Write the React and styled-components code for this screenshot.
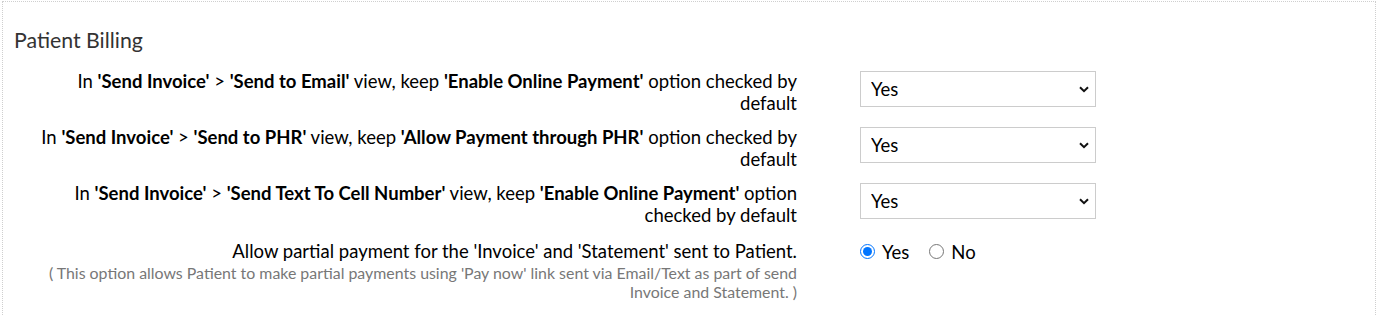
import React from 'react'
import styled, { createGlobalStyle } from 'styled-components'

const GlobalStyle = createGlobalStyle`
  html, body {
    margin: 0;
    padding: 0;
    background: #fff;
  }
  body {
    font-family: Lato, "Open Sans", "Liberation Sans", sans-serif;
    color: #000;
  }
`

const Panel = styled.section`
  margin: 1px 2px 0 2px;
  min-height: 330px;
  border: 1px dotted #cfcfcf;
  padding: 27px 0 0 11px;
  box-sizing: border-box;
`

const Heading = styled.h3`
  margin: 0 0 20px 0;
  font-size: 21.3px;
  font-weight: 400;
  line-height: 22px;
  color: #333;
`

const Row = styled.div`
  display: grid;
  grid-template-columns: 783px 236px;
  column-gap: 63px;
  align-items: start;
  margin-bottom: ${props => props.gap || 13}px;
`

const Label = styled.div`
  padding-left: 17px;
  text-align: right;
  font-size: 18.5px;
  line-height: 21.5px;
  color: #000;

  b {
    font-weight: 700;
  }
`

const Hint = styled.div`
  font-size: 15.9px;
  line-height: 19px;
  color: #777;
`

const SelectWrap = styled.div`
  position: relative;
  width: 236px;
  height: 36px;
`

const Select = styled.select`
  appearance: none;
  width: 100%;
  height: 100%;
  box-sizing: border-box;
  border: 1px solid #ccc;
  border-radius: 0;
  background: #fff;
  padding: 0 28px 0 10px;
  font-family: Lato, "Open Sans", "Liberation Sans", sans-serif;
  font-size: 18.5px;
  color: #000;
  outline: none;
`

const Chevron = styled.svg`
  position: absolute;
  right: 7px;
  top: 15px;
  pointer-events: none;
`

const RadioGroup = styled.div`
  display: flex;
  align-items: center;
  gap: 20px;
  height: 21px;
`

const RadioLabel = styled.label`
  display: inline-flex;
  align-items: center;
  gap: 7px;
  font-size: 18.5px;
  color: #000;

  input {
    margin: 0;
    width: 15px;
    height: 15px;
  }
`

const YesNoSelect = () => (
  <SelectWrap>
    <Select defaultValue="Yes">
      <option>Yes</option>
      <option>No</option>
    </Select>
    <Chevron width="10" height="7" viewBox="0 0 10 7">
      <path d="M1 1.2 L5 5.2 L9 1.2" fill="none" stroke="#111" strokeWidth="2" />
    </Chevron>
  </SelectWrap>
)

const rows = [
  <>In <b>'Send Invoice'</b> &gt; <b>'Send to Email'</b> view, keep <b>'Enable Online Payment'</b> option checked by default</>,
  <>In <b>'Send Invoice'</b> &gt; <b>'Send to PHR'</b> view, keep <b>'Allow Payment through PHR'</b> option checked by default</>,
  <>In <b>'Send Invoice'</b> &gt; <b>'Send Text To Cell Number'</b> view, keep <b>'Enable Online Payment'</b> option checked by default</>,
]

export default function App() {
  return (
    <>
      <GlobalStyle />
      <Panel>
        <Heading>Patient Billing</Heading>
        {rows.map((text, i) => (
          <Row key={i} gap={i === 2 ? 15 : 13}>
            <Label>{text}</Label>
            <YesNoSelect />
          </Row>
        ))}
        <Row>
          <Label>
            Allow partial payment for the 'Invoice' and 'Statement' sent to Patient.
            <Hint>( This option allows Patient to make partial payments using 'Pay now' link sent via Email/Text as part of send Invoice and Statement. )</Hint>
          </Label>
          <RadioGroup>
            <RadioLabel>
              <input type="radio" name="partial" defaultChecked /> Yes
            </RadioLabel>
            <RadioLabel>
              <input type="radio" name="partial" /> No
            </RadioLabel>
          </RadioGroup>
        </Row>
      </Panel>
    </>
  )
}
